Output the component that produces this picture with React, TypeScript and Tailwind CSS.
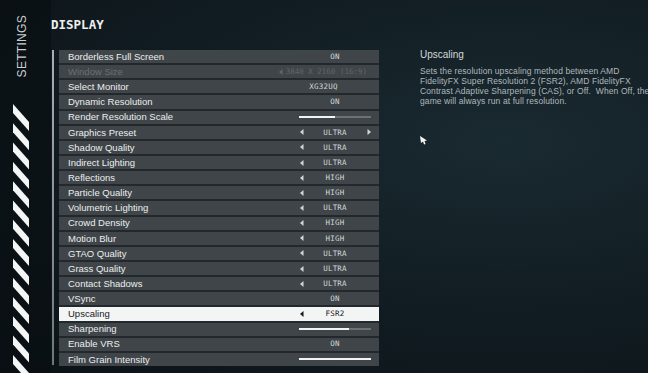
type Control =
  | { kind: "text"; value: string; left?: boolean; right?: boolean; shift?: boolean }
  | { kind: "slider"; fill: number }
  | { kind: "dim"; value: string };

interface SettingRow {
  label: string;
  control: Control;
  dim?: boolean;
  active?: boolean;
}

const rows: SettingRow[] = [
  { label: "Borderless Full Screen", control: { kind: "text", value: "ON" } },
  { label: "Window Size", dim: true, control: { kind: "dim", value: "3840 X 2160 (16:9)" } },
  { label: "Select Monitor", control: { kind: "text", value: "XG32UQ", shift: true } },
  { label: "Dynamic Resolution", control: { kind: "text", value: "ON" } },
  { label: "Render Resolution Scale", control: { kind: "slider", fill: 50 } },
  { label: "Graphics Preset", control: { kind: "text", value: "ULTRA", left: true, right: true } },
  { label: "Shadow Quality", control: { kind: "text", value: "ULTRA", left: true } },
  { label: "Indirect Lighting", control: { kind: "text", value: "ULTRA", left: true } },
  { label: "Reflections", control: { kind: "text", value: "HIGH", left: true } },
  { label: "Particle Quality", control: { kind: "text", value: "HIGH", left: true } },
  { label: "Volumetric Lighting", control: { kind: "text", value: "ULTRA", left: true } },
  { label: "Crowd Density", control: { kind: "text", value: "HIGH", left: true } },
  { label: "Motion Blur", control: { kind: "text", value: "HIGH", left: true } },
  { label: "GTAO Quality", control: { kind: "text", value: "ULTRA", left: true } },
  { label: "Grass Quality", control: { kind: "text", value: "ULTRA", left: true } },
  { label: "Contact Shadows", control: { kind: "text", value: "ULTRA", left: true } },
  { label: "VSync", control: { kind: "text", value: "ON" } },
  { label: "Upscaling", active: true, control: { kind: "text", value: "FSR2", left: true } },
  { label: "Sharpening", control: { kind: "slider", fill: 69 } },
  { label: "Enable VRS", control: { kind: "text", value: "ON" } },
  { label: "Film Grain Intensity", control: { kind: "slider", fill: 100 } },
];

function Arrow({ dir, className }: { dir: "left" | "right"; className: string }) {
  return (
    <svg width="4" height="6" viewBox="0 0 4 6" className={className}>
      {dir === "left" ? (
        <polygon points="3.5,0 3.5,6 0,3" fill="currentColor" />
      ) : (
        <polygon points="0.5,0 0.5,6 4,3" fill="currentColor" />
      )}
    </svg>
  );
}

function RowControl({ control, active }: { control: Control; active?: boolean }) {
  if (control.kind === "dim") {
    return (
      <div className="ml-auto mr-[12px] flex items-center gap-[3px] text-[#5f666a] font-['DejaVu_Sans_Mono',monospace] text-[7.5px] leading-none">
        <Arrow dir="left" className="text-[#5f666a]" />
        <span>{control.value}</span>
      </div>
    );
  }
  if (control.kind === "slider") {
    return (
      <div className="ml-auto mr-[6px] w-[76px] px-[2px]">
        <div className="h-[2px] w-full bg-[#6b7276]">
          <div className="h-full bg-[#f2f4f4]" style={{ width: `${control.fill}%` }} />
        </div>
      </div>
    );
  }
  const tone = active ? "text-[#15191b]" : "text-[#d2d6d7]";
  return (
    <div
      className={`ml-auto mr-[6px] grid w-[76px] grid-cols-[10px_1fr_10px] items-center ${tone} font-['DejaVu_Sans_Mono',monospace] text-[7.5px] leading-none tracking-[0.2px]`}
    >
      <div className="pl-[3px]">{control.left && <Arrow dir="left" className="block" />}</div>
      <div className={`flex justify-center ${control.shift ? "pr-[23px]" : ""}`}>
        <span>{control.value}</span>
      </div>
      <div className="pl-[4px]">{control.right && <Arrow dir="right" className="block" />}</div>
    </div>
  );
}

function Stripes() {
  const bands = Array.from({ length: 14 }, (_, i) => i * 19.3);
  return (
    <svg width="18" height="270" viewBox="0 0 18 270">
      {bands.map((y) => (
        <polygon key={y} points={`0,${y} 16,${y + 18} 16,${y + 27} 0,${y + 9}`} fill="#f4f5f5" />
      ))}
    </svg>
  );
}

export default function App() {
  return (
    <div className="relative flex h-[373px] w-[648px] overflow-hidden bg-[radial-gradient(ellipse_at_78%_38%,#1a2a31_0%,#121e24_45%,#0b1216_100%)] font-['Liberation_Sans',Arial,sans-serif]">
      {/* left rail */}
      <div className="flex w-[51px] shrink-0 flex-col bg-[#090e11]/60">
        <div className="ml-[15px] mt-[15px] rotate-180 text-[12px] leading-[14px] tracking-[0.3px] text-[#c9cdcf] [writing-mode:vertical-rl]">
          SETTINGS
        </div>
        <div className="ml-[13px] mt-[27px]">
          <Stripes />
        </div>
      </div>

      {/* settings list */}
      <div className="flex w-[328px] shrink-0 flex-col">
        <h1 className="mt-[18px] h-[14px] font-['DejaVu_Sans_Mono',monospace] text-[12.5px] font-semibold leading-[14px] text-[#eef0f0]">
          DISPLAY
        </h1>
        <div className="mt-[18px] flex gap-[5px]">
          <div className="ml-[1px] h-[315px] w-[2px] bg-gradient-to-b from-[#a9afb1] to-[#6f7679]" />
          <div className="flex w-[320px] flex-col gap-[2px] bg-[#22282b]">
            {rows.map((row) => (
              <div
                key={row.label}
                className={`flex h-[13.15px] items-center pl-[9px] ${
                  row.active ? "bg-[#f3f4f4]" : "bg-[#3f4549]"
                }`}
              >
                <span
                  className={`text-[9.5px] leading-none ${
                    row.active ? "text-[#15191b]" : row.dim ? "text-[#6a7175]" : "text-[#eceeef]"
                  }`}
                >
                  {row.label}
                </span>
                <RowControl control={row.control} active={row.active} />
              </div>
            ))}
          </div>
        </div>
      </div>

      {/* description */}
      <div className="flex min-w-0 flex-1 flex-col pl-[41px] pt-[49px]">
        <h2 className="text-[10px] leading-[12px] text-[#d3d7d9]">Upscaling</h2>
        <p className="mt-[4.6px] whitespace-nowrap text-[8.5px] leading-[10.1px] tracking-[0.1px] text-[#b1b7ba]">
          Sets the resolution upscaling method between AMD
          <br />
          FidelityFX Super Resolution 2 (FSR2), AMD FidelityFX
          <br />
          Contrast Adaptive Sharpening (CAS), or Off.&nbsp; When Off, the
          <br />
          game will always run at full resolution.
        </p>
      </div>

      {/* mouse cursor */}
      <svg
        width="8"
        height="9"
        viewBox="0 0 8 9"
        className="absolute left-[420px] top-[136px]"
      >
        <polygon points="0,0 7,4.5 4.5,5 5.5,8 4,8.5 3,5.5 1,7" fill="#f4f5f5" />
      </svg>
    </div>
  );
}
